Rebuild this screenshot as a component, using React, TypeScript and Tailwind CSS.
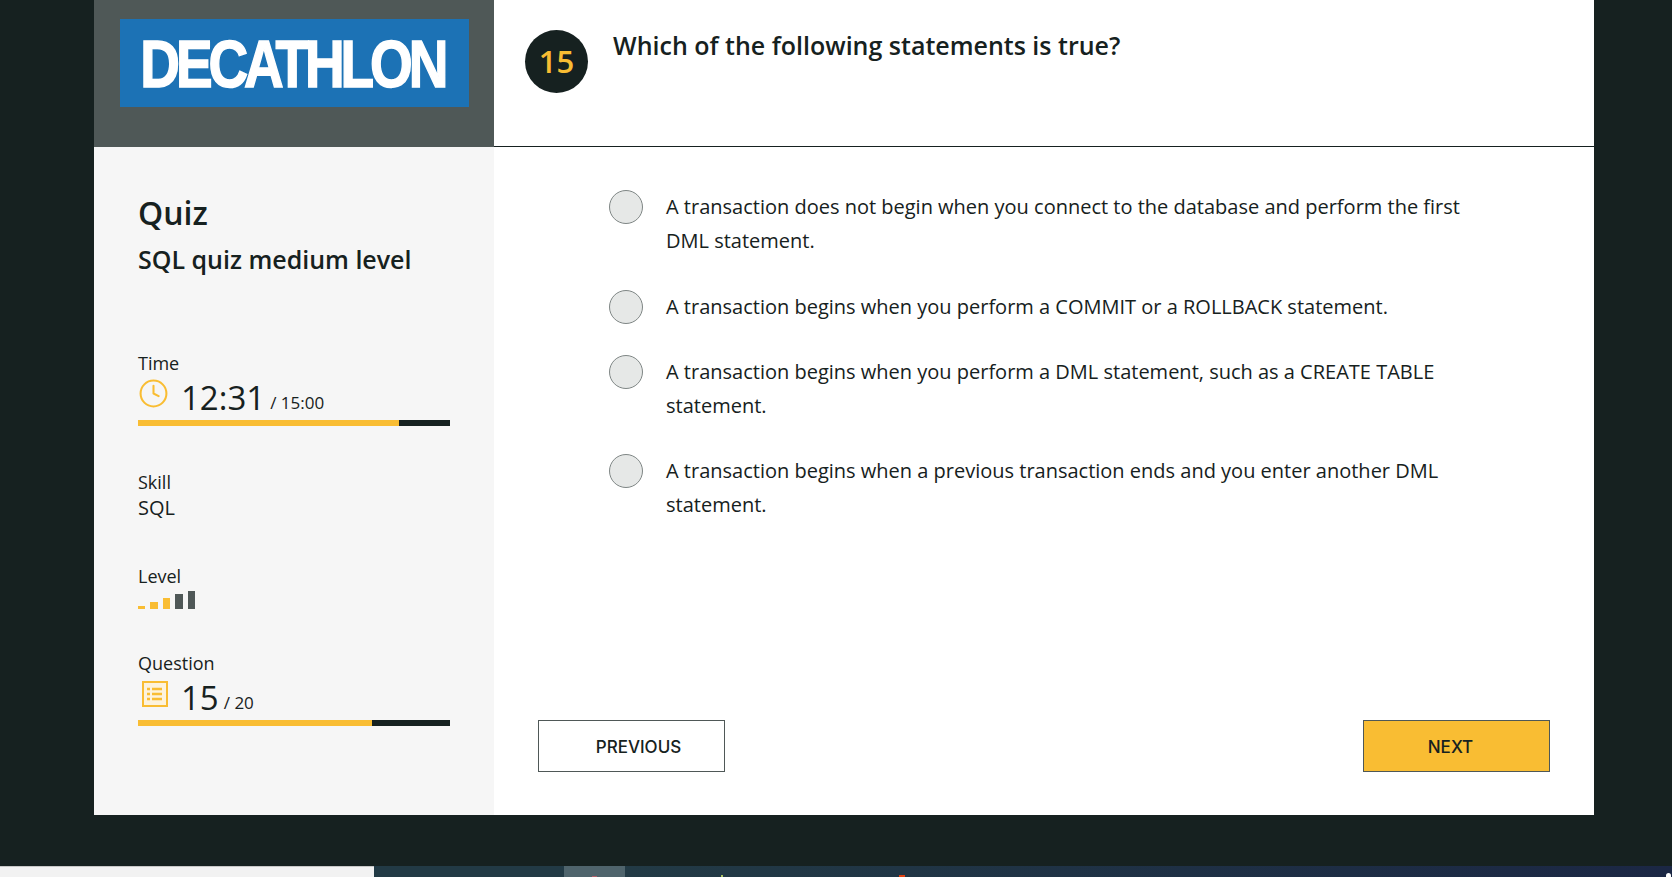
import { Clock } from "lucide-react";

const options = [
  "A transaction does not begin when you connect to the database and perform the first DML statement.",
  "A transaction begins when you perform a COMMIT or a ROLLBACK statement.",
  "A transaction begins when you perform a DML statement, such as a CREATE TABLE statement.",
  "A transaction begins when a previous transaction ends and you enter another DML statement.",
];

function ProgressBar({ filled }: { filled: number }) {
  return (
    <div className="h-[6px] w-[312px] bg-[#162120]">
      <div className="h-full bg-[#f9bd33]" style={{ width: filled }} />
    </div>
  );
}

function ListIcon() {
  return (
    <svg className="w-[26px] h-[26px] text-[#f9bd33]" viewBox="0 0 26 26" fill="none" stroke="currentColor" strokeWidth={2}>
      <rect x="1" y="1" width="24" height="24" fill="#fdf3dd" />
      <path d="M5 8h3M10 8h10M5 13h3M10 13h10M5 18h3M10 18h10" strokeWidth={2.6} />
    </svg>
  );
}

export default function App() {
  return (
    <div className="h-[877px] overflow-hidden bg-[#162120] flex flex-col font-['Open_Sans',sans-serif] text-[#162120]">
      {/* Quiz card */}
      <div className="ml-[94px] w-[1500px] h-[815px] bg-white flex">
        {/* Sidebar */}
        <div className="w-[400px] flex flex-col bg-[#f6f6f6]">
          <div className="h-[147px] bg-[#4f5857] pt-[19px] pl-[26px]">
            <div className="w-[349px] h-[88px] bg-[#1c72b5] flex items-center justify-center overflow-hidden pr-[4px]">
              <span className="font-['Liberation_Sans',sans-serif] font-bold text-white text-[67px] leading-none tracking-[-5px] scale-x-[0.82] whitespace-nowrap [-webkit-text-stroke:1.5px_white]">
                DECATHLON
              </span>
            </div>
          </div>

          <div className="pl-[44px] pt-[44px]">
            <h1 className="text-[32px] leading-[44px] font-semibold">Quiz</h1>
            <h2 className="text-[25px] leading-[36px] font-semibold mt-[6px] whitespace-nowrap">SQL quiz medium level</h2>

            <div className="mt-[74px] text-[18px] leading-[24px]">Time</div>
            <div className="flex items-end h-[40px] mt-[3px]">
              <Clock className="w-[31px] h-[31px] mb-[9px] text-[#f9bd33]" strokeWidth={1.6} />
              <span className="text-[33px] leading-[40px] ml-[12px] font-medium">12:31</span>
              <span className="text-[17px] leading-[28px] ml-[5px] mb-[1px]">/ 15:00</span>
            </div>
            <div className="mt-[2px]">
              <ProgressBar filled={261} />
            </div>

            <div className="mt-[44px] text-[18px] leading-[24px]">Skill</div>
            <div className="text-[20px] leading-[28px]">SQL</div>

            <div className="mt-[42px] text-[18px] leading-[24px]">Level</div>
            <div className="flex items-end h-[18px] mt-[3px]">
              <div className="w-[7px] h-[3px] bg-[#f9bd33]" />
              <div className="w-[8px] h-[7px] bg-[#f9bd33] ml-[5px]" />
              <div className="w-[7px] h-[11px] bg-[#f9bd33] ml-[5px]" />
              <div className="w-[8px] h-[15px] bg-[#4f5857] ml-[5px]" />
              <div className="w-[7px] h-[18px] bg-[#4f5857] ml-[5px]" />
            </div>

            <div className="mt-[42px] text-[18px] leading-[24px]">Question</div>
            <div className="flex items-end h-[40px] mt-[3px]">
              <div className="ml-[4px] mb-[11px]">
                <ListIcon />
              </div>
              <span className="text-[33px] leading-[40px] ml-[13px] font-medium">15</span>
              <span className="text-[17px] leading-[28px] ml-[5px] mb-[1px]">/ 20</span>
            </div>
            <div className="mt-[2px]">
              <ProgressBar filled={234} />
            </div>
          </div>
        </div>

        {/* Question */}
        <div className="flex-1 flex flex-col">
          <div className="h-[147px] border-b border-[#162120] flex items-start pl-[31px] pt-[30px]">
            <div className="w-[63px] h-[63px] rounded-full bg-[#162120] flex items-center justify-center text-[31px] font-semibold text-[#f9bd33]">
              15
            </div>
            <p className="ml-[25px] mt-[-3px] text-[25px] leading-[36px] font-semibold">Which of the following statements is true?</p>
          </div>

          <div className="flex-1 flex flex-col gap-[31px] pl-[115px] pt-[43px]">
            {options.map((text) => (
              <div key={text} className="flex items-start first:mb-[1px]">
                <div className="w-[34px] h-[34px] rounded-full bg-[#e6e8e7] border border-[#7f8685] shrink-0" />
                <p className="ml-[23px] w-[820px] text-[20px] leading-[34px]">{text}</p>
              </div>
            ))}
          </div>

          <div className="flex justify-between px-[44px] pb-[43px] font-['Inter',sans-serif] text-[17px] font-medium">
            <button className="w-[187px] h-[52px] border border-[#4f5857] bg-white pl-[14px] pt-[3px]">PREVIOUS</button>
            <button className="w-[187px] h-[52px] border border-[#4f5857] bg-[#f9bd33] pr-[12px] pt-[3px]">NEXT</button>
          </div>
        </div>
      </div>

      <div className="flex-1" />

      {/* Strip of the desktop taskbar */}
      <div className="relative h-[11px] flex">
        <div className="w-[374px] bg-[#f2f2f2] border-t border-[#c8c8c8]" />
        <div className="w-[190px] bg-[#223a45]" />
        <div className="w-[61px] bg-[#4f646c]" />
        <div className="flex-1 bg-gradient-to-r from-[#223a45] to-[#1b2744]" />
        <div className="absolute left-[592px] bottom-0 w-[5px] h-[1px] bg-[#b0606a]" />
        <div className="absolute left-[721px] bottom-0 w-[2px] h-[2px] bg-[#a8c060]" />
        <div className="absolute left-[899px] bottom-0 w-[6px] h-[2px] bg-[#e04010]" />
        <div className="absolute left-[1666px] bottom-0 w-[5px] h-[4px] rounded-t-sm bg-white" />
      </div>
    </div>
  );
}
